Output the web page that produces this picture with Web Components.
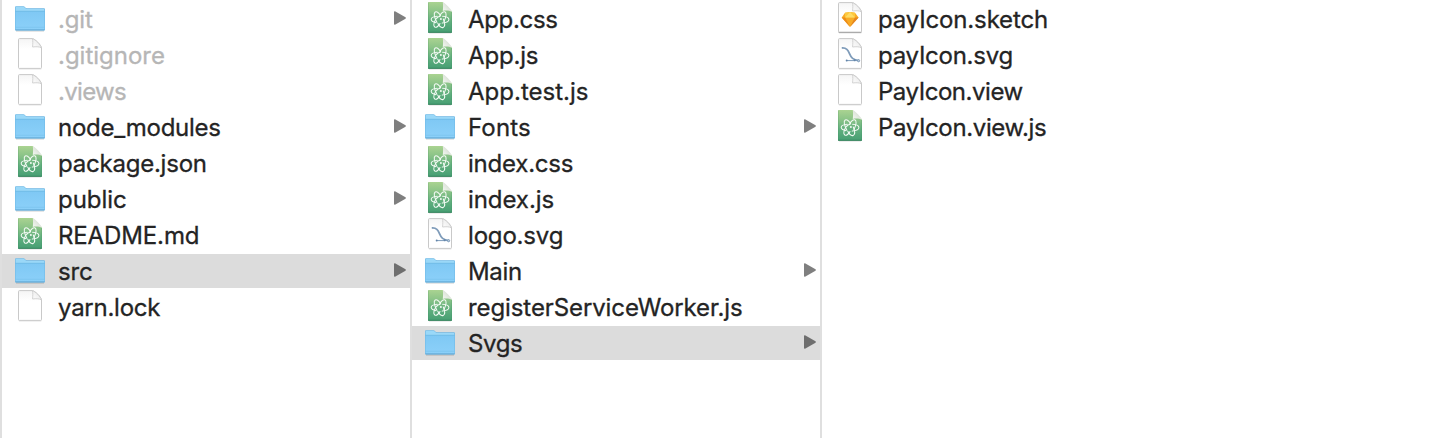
<!DOCTYPE html>
<html lang="en">
<head>
<meta charset="utf-8">
<title>Files</title>
<style>
html,body{margin:0;height:100%;background:#fff;overflow:hidden}
body{font-family:Inter,"Open Sans",sans-serif;font-size:24px;color:#242424}
</style>
</head>
<body>
<column-browser>
  <file-column>
    <file-row kind="folder" end="35" dim arrow>.git</file-row>
    <file-row kind="blank" end="106" dim>.gitignore</file-row>
    <file-row kind="blank" end="68" dim>.views</file-row>
    <file-row kind="folder" end="162.3" arrow>node_modules</file-row>
    <file-row kind="atom" end="147.8">package.json</file-row>
    <file-row kind="folder" end="68" arrow>public</file-row>
    <file-row kind="atom" end="139.8">README.md</file-row>
    <file-row kind="folder" end="34" arrow selected>src</file-row>
    <file-row kind="blank" end="102.3">yarn.lock</file-row>
  </file-column>
  <file-column>
    <file-row kind="atom" end="89.3">App.css</file-row>
    <file-row kind="atom" end="69.8">App.js</file-row>
    <file-row kind="atom" end="119.8">App.test.js</file-row>
    <file-row kind="folder" end="62" arrow>Fonts</file-row>
    <file-row kind="atom" end="104.8">index.css</file-row>
    <file-row kind="atom" end="85.5">index.js</file-row>
    <file-row kind="vector" end="93.7">logo.svg</file-row>
    <file-row kind="folder" end="53" arrow>Main</file-row>
    <file-row kind="atom" end="274">registerServiceWorker.js</file-row>
    <file-row kind="folder" end="54" arrow selected>Svgs</file-row>
  </file-column>
  <file-column last>
    <file-row kind="sketch" end="169">payIcon.sketch</file-row>
    <file-row kind="vector" end="133.4">payIcon.svg</file-row>
    <file-row kind="blank" end="144.5">PayIcon.view</file-row>
    <file-row kind="atom" end="168">PayIcon.view.js</file-row>
  </file-column>
</column-browser>
<script>
class ColumnBrowser extends HTMLElement{
  constructor(){
    super();
    this.attachShadow({mode:'open'}).innerHTML=`<style>:host{display:flex;height:100vh;background:#fff}</style><slot></slot>`;
  }
}
class FileColumn extends HTMLElement{
  constructor(){
    super();
    this.attachShadow({mode:'open'}).innerHTML=`<style>
      :host{display:flex;flex-direction:column;gap:2px;box-sizing:border-box;width:410px;flex:none;border-left:2px solid #dfdfdf;padding-top:2px}
      :host([last]){width:auto;flex:1}
    </style><slot></slot>`;
  }
}

const paper=`<defs>
  <linearGradient id="pg" x2="0" y2="1"><stop offset="0" stop-color="#f5f5f5"/><stop offset=".35" stop-color="#fff"/></linearGradient>
  <linearGradient id="fold" x1="0" y1="1" x2="1" y2="0"><stop offset="0" stop-color="#fff"/><stop offset=".55" stop-color="#f0f0f0"/><stop offset="1" stop-color="#ccc"/></linearGradient></defs>
  <path d="M1 31H23.3" stroke="#000" stroke-opacity=".14" stroke-width=".8"/>
  <path d="M1.5.6H14.3C17 .9 23.1 6.8 23.5 9.8V29.6Q23.5 30.4 22.7 30.4H1.3Q.5 30.4.5 29.6V1.5Q.5.6 1.5.6Z" fill="url(#pg)" stroke="#c3c3c3" stroke-width=".9"/>
  <path d="M14.5.8C15 3 14.8 6 14.6 9 18 8.5 21.4 8.6 23.3 9.8 22.6 6.7 17.4 1.4 14.5.8Z" fill="url(#fold)" stroke="#c9c9c9" stroke-width=".8"/>`;
const icons={
  folder:`<svg width="30" height="26" viewBox="0 0 30 26"><defs><linearGradient id="f" x2="0" y2="1"><stop offset="0" stop-color="#7fc8f4"/><stop offset="1" stop-color="#8bd0f9"/></linearGradient></defs>
    <path d="M1 25H29" stroke="#000" stroke-opacity=".2" stroke-width="1"/>
    <path d="M0 1.2Q0 .2 1 .2H8.3C10 .2 10.2 2.3 12 2.3H29Q30 2.3 30 3.3V23.6Q30 24.5 29 24.5H1Q0 24.5 0 23.6Z" fill="#6eb7e4"/>
    <path d="M.6 1.4Q.6.8 1.2.8H8.2C9.8.8 10 2.9 12 2.9H28.8Q29.4 2.9 29.4 3.5V6H.6Z" fill="#9ad8f8"/>
    <path d="M.5 5.3H29.5V23.3H.5Z" fill="url(#f)"/>
    <path d="M0 5.3H30" stroke="#6ab6e4" stroke-width=".8"/>
    <path d="M.5 21.3H29.5" stroke="#78c1ed" stroke-width=".7"/>
    <path d="M.5 24H29.5" stroke="#66a9d4" stroke-width=".8"/></svg>`,
  blank:`<svg width="24" height="32" viewBox="0 0 24 32" fill="none">${paper}</svg>`,
  vector:`<svg width="24" height="32" viewBox="0 0 24 32" fill="none">${paper}
    <path d="M3.8 10C8.5 9.6 10 12.2 11.6 15.8 13.2 19.6 14.8 22 21 22.7" stroke="#7f9cba" stroke-width="1.8"/>
    <path d="M8.5 22.6H20.5" stroke="#7c9bbb" stroke-width="1"/>
    <circle cx="8.7" cy="22.6" r="1" fill="#6385a9"/><circle cx="16.6" cy="22.3" r="1" fill="#6385a9"/><circle cx="20.6" cy="22.7" r="1.1" fill="#c5d2e0" stroke="#6f8fb1" stroke-width=".8"/></svg>`,
  sketch:`<svg width="24" height="32" viewBox="0 0 24 32" fill="none">${paper}<path d="M.7 30.3H23.3" stroke="#a3a3a3"/>
    <path d="M3.7 15.6 7 10.8 12 10.1 17 10.8 20.6 15.6 12 25Z" fill="#f8ab25"/>
    <path d="M7 10.8 12 10.1 17 10.8 17.2 15.6H7Z" fill="#fdc83c"/><path d="M12 10.1 7.2 15.6H16.9Z" fill="#fedb64"/>
    <path d="M3.7 15.6H7.2L12 25Z" fill="#ed8c19"/><path d="M20.6 15.6H16.9L12 25Z" fill="#e58520"/></svg>`,
  atom:`<svg width="24" height="32" viewBox="0 0 24 32" fill="none"><defs>
    <linearGradient id="g" x2="0" y2="1"><stop offset="0" stop-color="#aad391"/><stop offset=".3" stop-color="#8cc488"/><stop offset=".65" stop-color="#5fae7d"/><stop offset="1" stop-color="#469e73"/></linearGradient>
    <linearGradient id="h" x1="0" y1="1" x2="1" y2="0"><stop offset="0" stop-color="#f5f8f3"/><stop offset="1" stop-color="#cbd5c7"/></linearGradient></defs>
    <path d="M1 31H23" stroke="#000" stroke-opacity=".18" stroke-width=".8"/>
    <path d="M.6 0H14.6L24 9.4V30.2Q24 30.8 23.4 30.8H.6Q0 30.8 0 30.2V.6Q0 0 .6 0Z" fill="url(#g)"/>
    <path d="M.3.5V30.3M23.7 10V30.3" stroke="#3f8d60" stroke-opacity=".4" stroke-width=".6"/><path d="M.3 30.3H23.7" stroke="#37805b" stroke-width=".9"/>
    <path d="M14.8.3C15.2 3 15.1 6 14.8 8.9 18 8.4 21.5 8.5 23.8 9.8 22.8 6.7 17.6 1.4 14.8.3Z" fill="url(#h)"/>
    <g stroke="#f3faf4" stroke-width="1.05" stroke-linecap="round" stroke-linejoin="round">
      <path d="M9.2 14.3C5.6 14.6 3.2 15.7 3.2 17.3 3.2 18.9 5.2 20.1 8 20.7"/>
      <path d="M14.6 14.3C18.3 14.5 20.9 15.9 20.9 17.6 20.9 19.6 17.2 20.9 14.2 21.1"/>
      <path d="M8.9 20.3C6.4 16 5.3 11.1 7.2 10 8.6 9.2 11 11.2 12.6 13.6"/>
      <path d="M11.6 14.2C13 11.2 15.3 9.1 16.8 9.8 18.7 10.8 17.9 15.4 16 19.6"/>
      <path d="M8.3 16.2C6.2 19.8 5.2 23.9 6.8 25 8.2 25.9 10.5 23.8 12 21.6"/>
      <path d="M9.8 21.3C11.3 24.2 13.6 26.1 15.3 25.4 17 24.5 16.8 20.6 15.3 17"/>
      <path d="M8.6 16.4C9.5 14.6 10.5 14.4 12 14.5"/>
    </g><circle cx="12.9" cy="16.9" r="1" fill="#f3faf4"/></svg>`
};

class FileRow extends HTMLElement{
  connectedCallback(){
    if(this.shadowRoot)return;
    const kind=this.getAttribute('kind');
    this.attachShadow({mode:'open'}).innerHTML=`<style>
      :host{display:grid;grid-template-columns:56px 1fr 16px;height:34px;line-height:34px;white-space:pre}
      :host([selected]){background:#dcdcdc}
      :host([dim]){color:#b6b6b6}
      .icon{display:block;padding:${kind==='folder'?'4px 0 0 13px':'0 0 0 16px'};height:30px}
      .icon svg{display:block}
      .name{display:block;padding-top:1px;height:33px;-webkit-text-stroke:.3px currentColor}
      .arrow{display:block;padding-top:9px;color:#7f7f7f}
      :host([selected]) .arrow{color:#6e6e6e}
      .arrow svg{display:block}
    </style><span class="icon">${icons[kind]}</span><span class="name"><slot></slot></span>${this.hasAttribute('arrow')?'<span class="arrow"><svg width="12" height="14" viewBox="0 0 12 14"><path d="M1 .2 11.5 6.3Q12.2 7 11.5 7.7L1 13.8Q0 14 0 13V1Q0 0 1 .2Z" fill="currentColor"/></svg></span>':''}`;
    // Track each name so its last glyph ends at the given offset.
    const ctx=document.createElement('canvas').getContext('2d');
    ctx.font='24px Inter';
    const text=this.textContent;
    const right=ctx.measureText(text).actualBoundingBoxRight;
    this.style.letterSpacing=((+this.getAttribute('end')-right)/(text.length-1)).toFixed(3)+'px';
  }
}
customElements.define('column-browser',ColumnBrowser);
customElements.define('file-column',FileColumn);
customElements.define('file-row',FileRow);
</script>
</body>
</html>
